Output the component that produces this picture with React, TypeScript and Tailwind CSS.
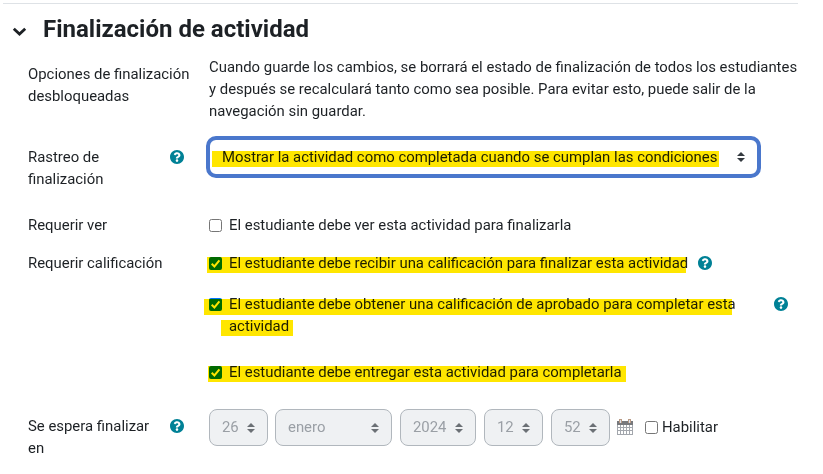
import type { ReactNode } from "react";

function HelpIcon({ className = "" }: { className?: string }) {
  return (
    <svg viewBox="8 8 496 496" className={`size-[14px] shrink-0 fill-[#008196] ${className}`} aria-label="Ayuda">
      <path d="M504 256c0 137-111 248-248 248S8 393 8 256 119 8 256 8s248 111 248 248zM262.700 90c-54.500 0-89.300 23-116.500 63.800-3.500 5.300-2.400 12.400 2.700 16.300l34.700 26.300c5.200 3.900 12.600 3 16.700-2.100 17.900-22.700 30.100-35.800 57.300-35.800 20.400 0 45.700 13.100 45.700 33 0 15-12.400 22.700-32.500 34C247.100 238.500 216 254.900 216 296v4c0 6.600 5.400 12 12 12h56c6.600 0 12-5.400 12-12v-1.300c0-28.500 83.200-29.600 83.200-106.700 0-58-60.200-102-116.500-102zM256 338c-25.400 0-46 20.600-46 46s20.600 46 46 46 46-20.600 46-46-20.600-46-46-46z" />
    </svg>
  );
}

function Arrows({ className = "" }: { className?: string }) {
  return (
    <svg viewBox="0 0 4 5" className={`h-[10px] w-2 shrink-0 fill-[#343a40] ${className}`}>
      <path d="M2 0L0 2h4zm0 5L0 3h4z" />
    </svg>
  );
}

function Checkbox({ checked = false }: { checked?: boolean }) {
  return checked ? (
    <svg viewBox="0 0 13 13" className="size-[13px] shrink-0">
      <rect width="13" height="13" rx="2" fill="#0075ff" />
      <path d="M2.700 6.700l2.700 2.700 5-6" fill="none" stroke="#fff" strokeWidth="2" />
    </svg>
  ) : (
    <span className="size-[13px] shrink-0 rounded-[2.500px] border border-[#767676] bg-white" />
  );
}

function Mark({ className }: { className: string }) {
  return <span className={`pointer-events-none absolute h-4 bg-[#ffe600] mix-blend-multiply ${className}`} />;
}

function Row({ label, help, className, children }: { label: string; help?: boolean; className: string; children: ReactNode }) {
  return (
    <div className={`flex items-start ${className}`}>
      <div className="flex w-[181px] shrink-0 justify-between pr-[25px]">
        <span className={help ? "w-[130px]" : "w-[170px] shrink-0"}>{label}</span>
        {help && <HelpIcon className="mt-1" />}
      </div>
      {children}
    </div>
  );
}

function DateSelect({ value, className }: { value: string; className: string }) {
  return (
    <div className={`flex h-[37px] shrink-0 items-center justify-between rounded-lg border border-[#b1b7bd] bg-[#eff1f3] pr-3 pl-3 text-[#9a9fa5] ${className}`}>
      <span className="-mt-px">{value}</span>
      <Arrows className="opacity-70" />
    </div>
  );
}

export default function App() {
  return (
    <main className="h-[474px] w-[823px] overflow-hidden bg-white pt-[3px] font-['Roboto',sans-serif] text-[14.900px] leading-[22px] text-[#1d2125]">
      <div className="ml-[3px] w-[795px] border-t border-[#dee2e6]" />
      <header className="mt-[10px] flex h-[30px] items-center pl-[12px]">
        <svg viewBox="0 0 15 10" className="mt-[5px] h-[10px] w-[15px]" fill="none" stroke="#1d2125" strokeWidth="2.800">
          <path d="M1.800 1.700L7.500 7L13.200 1.700" />
        </svg>
        <h2 className="ml-4 text-[24px] font-bold whitespace-nowrap">Finalización de actividad</h2>
      </header>

      <section className="pl-[28px]">
        <div className="flex h-[93px] items-start pt-3">
          <span className="mt-[7px] w-[181px] shrink-0 pr-[18px]">Opciones de finalización desbloqueadas</span>
          <p className="whitespace-nowrap">
            Cuando guarde los cambios, se borrará el estado de finalización de todos los estudiantes<br />
            y después se recalculará tanto como sea posible. Para evitar esto, puede salir de la<br />
            navegación sin guardar.
          </p>
        </div>

        <Row label="Rastreo de finalización" help className="h-[77px] pt-[9px]">
          <div className="relative -mt-[10px] -ml-[3px] flex h-[42px] w-[555px] items-center justify-between rounded-[10px] border-4 border-[#4a77cc] bg-white pr-3 pl-3">
            <span className="-mt-px whitespace-nowrap">Mostrar la actividad como completada cuando se cumplan las condiciones</span>
            <Arrows />
            <Mark className="top-[11px] left-[2px] w-[507px]" />
          </div>
        </Row>

        <Row label="Requerir ver" className="h-[38px]">
          <label className="flex h-[22px] items-center gap-[7px] whitespace-nowrap">
            <Checkbox />
            <span>El estudiante debe ver esta actividad para finalizarla</span>
          </label>
        </Row>

        <Row label="Requerir calificación" className="h-[163px]">
          <div>
            <div className="relative flex h-[41px] items-start">
              <label className="flex h-[22px] items-center gap-[7px] whitespace-nowrap">
                <Checkbox checked />
                <span>El estudiante debe recibir una calificación para finalizar esta actividad</span>
              </label>
              <HelpIcon className="mt-1 ml-[10px]" />
              <Mark className="top-[5px] -left-[2px] w-[479px]" />
            </div>
            <div className="relative flex h-[68px] items-start">
              <label className="flex w-[565px] gap-[7px]">
                <span className="flex h-[22px] items-center"><Checkbox checked /></span>
                <span className="whitespace-nowrap">El estudiante debe obtener una calificación de aprobado para completar esta<br />actividad</span>
              </label>
              <HelpIcon className="mt-1" />
              <Mark className="top-[6px] -left-[5px] w-[528px]" />
              <Mark className="top-[27px] left-[12px] w-[72px]" />
            </div>
            <div className="relative">
              <label className="flex h-[22px] items-center gap-[7px] whitespace-nowrap">
                <Checkbox checked />
                <span>El estudiante debe entregar esta actividad para completarla</span>
              </label>
              <Mark className="top-[5px] -left-[1px] w-[418px]" />
            </div>
          </div>
        </Row>

        <Row label="Se espera finalizar en" help className="h-[50px]">
          <div className="-mt-[6px] flex items-center">
            <DateSelect value="26" className="w-[59px]" />
            <DateSelect value="enero" className="ml-[7px] w-[117px]" />
            <DateSelect value="2024" className="ml-2 w-[76px]" />
            <DateSelect value="12" className="ml-2 w-[59px]" />
            <DateSelect value="52" className="ml-2 w-[59px]" />
            <svg viewBox="0 0 16 16" className="-mt-[2px] ml-[7px] size-4 shrink-0">
              <path d="M0 2h16v4H0z" fill="#77797d" />
              <path d="M0 6h16v10H0z" fill="#a3a7ad" />
              <path d="M1 6h2v2H1zm3 0h2v2H4zm3 0h2v2H7zm3 0h2v2h-2zm3 0h2v2h-2zM1 9h2v2H1zm3 0h2v2H4zm3 0h2v2H7zm3 0h2v2h-2zm3 0h2v2h-2zM1 12h2v3H1zm3 0h2v3H4zm3 0h2v3H7zm3 0h2v3h-2zm3 0h2v3h-2z" fill="#fff" />
              <path d="M2 0h3v4H2zM11 0h3v4h-3z" fill="#b99a85" />
              <path d="M3 1h1v3H3zM12 1h1v3h-1z" fill="#d9e1ed" />
            </svg>
            <label className="ml-3 flex items-center gap-[4px]">
              <Checkbox />
              <span className="-mt-[2px]">Habilitar</span>
            </label>
          </div>
        </Row>
      </section>
    </main>
  );
}
